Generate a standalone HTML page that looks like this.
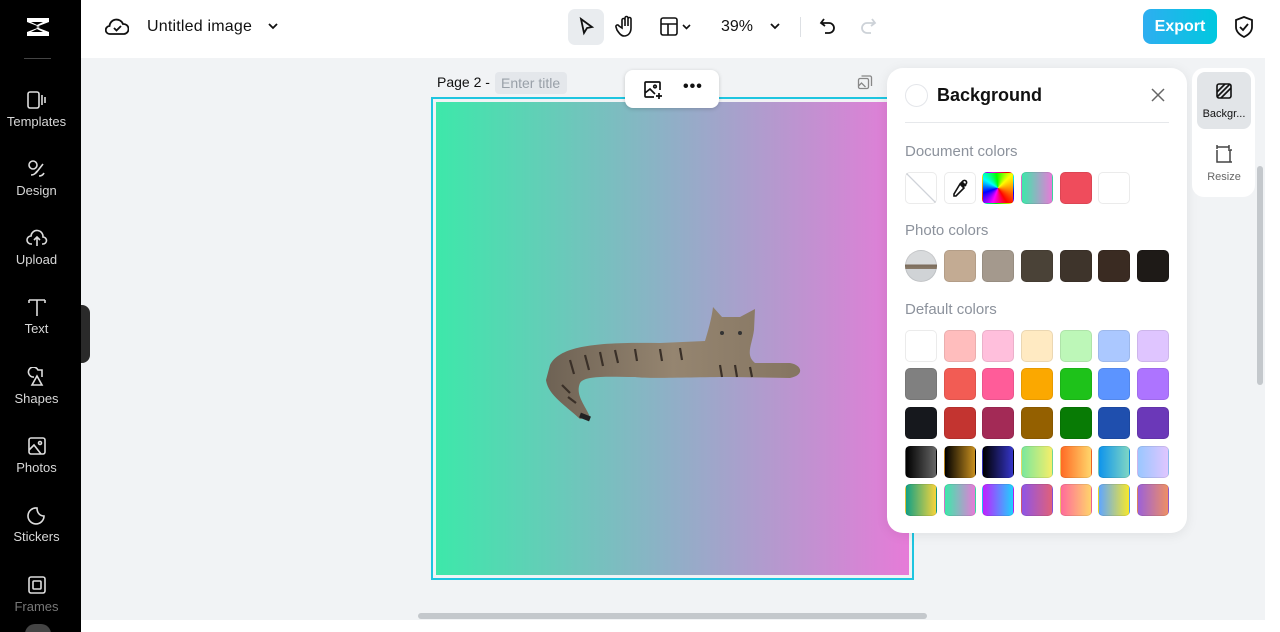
<!DOCTYPE html>
<html><head><meta charset="utf-8"><style>
*{box-sizing:border-box;margin:0;padding:0}
html,body{width:1280px;height:632px;overflow:hidden}
body{background:#f1f3f5;font-family:"Liberation Sans",sans-serif;position:relative}
.side{position:absolute;left:0;top:0;width:81px;height:632px;background:#000;overflow:hidden}
.side .it{position:absolute;left:-4px;width:81px;text-align:center;color:#d8d8d8;font-size:13px}
.side svg{display:block;margin:0 auto 4px}
.top{position:absolute;left:81px;top:0;right:0;height:58px;background:#fff}
.abs{position:absolute}
.sw{position:absolute;width:32px;height:32px;border-radius:5px;border:1px solid rgba(0,0,0,.08)}
.lbl{position:absolute;left:905px;font-size:15px;color:#8c929c}
</style></head><body>
<div class="side">
  <svg class="abs" style="left:23px;top:14px" width="30" height="26" viewBox="0 0 30 26"><path d="M4 4 L26 4 L26 8 L13 13 L26 18 L26 22 L4 22 L4 18 L17 13 L4 8Z" fill="#fff"/><path d="M8 8 L20 8 L14 11Z M8 18 L20 18 L14 15Z" fill="#000"/></svg>
  <div class="abs" style="left:24px;top:58px;width:27px;height:1px;background:#444"></div>
  <div class="it" style="top:90px"><svg width="22" height="20" viewBox="0 0 22 20" fill="none" stroke="#ddd" stroke-width="1.6"><rect x="2" y="2" width="11" height="16" rx="2"/><path d="M16 5v10M19 7v6"/></svg>Templates</div>
  <div class="it" style="top:159px"><svg width="22" height="20" viewBox="0 0 22 20" fill="none" stroke="#ddd" stroke-width="1.6"><circle cx="7" cy="6" r="4"/><path d="M10 14l7-9M5 16c3 0 5-2 6-4M13 17c2 0 4-1 5-3"/></svg>Design</div>
  <div class="it" style="top:228px"><svg width="22" height="20" viewBox="0 0 22 20" fill="none" stroke="#ddd" stroke-width="1.6"><path d="M6 16H5a4 4 0 010-8 6 6 0 0112 1 3.5 3.5 0 010 7h-1M11 18v-8M8 12l3-3 3 3"/></svg>Upload</div>
  <div class="it" style="top:297px"><svg width="22" height="20" viewBox="0 0 22 20" fill="none" stroke="#ddd" stroke-width="1.6"><path d="M3 3h16M11 3v16M3 3v3M19 3v3"/></svg>Text</div>
  <div class="it" style="top:367px"><svg width="22" height="20" viewBox="0 0 22 20" fill="none" stroke="#ddd" stroke-width="1.6"><path d="M8 10a5 5 0 114 -7h4v7M11 9l-5 9h10z"/></svg>Shapes</div>
  <div class="it" style="top:436px"><svg width="22" height="20" viewBox="0 0 22 20" fill="none" stroke="#ddd" stroke-width="1.6"><rect x="3" y="2" width="16" height="16" rx="2"/><path d="M3 14l5-5 7 9"/><circle cx="14" cy="7" r="1.5"/></svg>Photos</div>
  <div class="it" style="top:505px"><svg width="22" height="20" viewBox="0 0 22 20" fill="none" stroke="#ddd" stroke-width="1.6"><path d="M18 11a8 8 0 11-7-8c0 5 3 8 7 8z"/></svg>Stickers</div>
  <div class="it" style="top:575px;color:#777"><svg width="22" height="20" viewBox="0 0 22 20" fill="none" stroke="#ddd" stroke-width="1.6"><rect x="3" y="2" width="16" height="16" rx="2"/><rect x="7" y="6" width="8" height="8" rx="1"/></svg>Frames</div>
  <div class="abs" style="left:25px;top:624px;width:26px;height:20px;border-radius:13px;background:#444"></div>
</div>
<div class="abs" style="left:81px;top:305px;width:9px;height:58px;background:#2a2a2a;border-radius:0 8px 8px 0"></div>
<div class="top">
  <svg class="abs" style="left:24px;top:16px" width="24" height="22" viewBox="0 0 24 22" fill="none" stroke="#111" stroke-width="1.8"><path d="M6 18H5a4 4 0 01-.5-8A7 7 0 0118 8a5 5 0 011 10z"/><path d="M9 12l2.5 2.5L16 10"/></svg>
  <div class="abs" style="left:66px;top:18px;font-size:16px;color:#111;font-weight:500;letter-spacing:.2px">Untitled image</div>
  <svg class="abs" style="left:186px;top:21px" width="12" height="10" viewBox="0 0 12 10" fill="none" stroke="#111" stroke-width="1.8"><path d="M2 3l4 4 4-4"/></svg>
  <div class="abs" style="left:487px;top:9px;width:36px;height:36px;border-radius:7px;background:#e9ecef"></div>
  <svg class="abs" style="left:495px;top:16px" width="20" height="22" viewBox="0 0 20 22" fill="none" stroke="#111" stroke-width="1.8"><path d="M5 3l11 8-5 1-3 5z"/></svg>
  <svg class="abs" style="left:534px;top:15px" width="22" height="24" viewBox="0 0 22 24" fill="none" stroke="#111" stroke-width="1.6"><path d="M7 13V5a1.5 1.5 0 013 0v6V3a1.5 1.5 0 013 0v8V4a1.5 1.5 0 013 0v9c0 5-3 8-7 8-3 0-5-3-7-6l-1-3a1.5 1.5 0 013-1z"/></svg>
  <svg class="abs" style="left:578px;top:16px" width="34" height="22" viewBox="0 0 34 22" fill="none" stroke="#111" stroke-width="1.6"><rect x="2" y="2" width="16" height="17" rx="2"/><path d="M2 8h16M9 8v11M24 9l3.5 3.5L31 9"/></svg>
  <div class="abs" style="left:640px;top:18px;font-size:16px;color:#111">39%</div>
  <svg class="abs" style="left:688px;top:21px" width="12" height="10" viewBox="0 0 12 10" fill="none" stroke="#111" stroke-width="1.8"><path d="M2 3l4 4 4-4"/></svg>
  <div class="abs" style="left:719px;top:17px;width:1px;height:20px;background:#dde0e4"></div>
  <svg class="abs" style="left:737px;top:16px" width="20" height="20" viewBox="0 0 20 20" fill="none" stroke="#111" stroke-width="1.8"><path d="M6 3L3 7l4 3M3 7h8a5 5 0 010 10H7"/></svg>
  <svg class="abs" style="left:777px;top:16px" width="20" height="20" viewBox="0 0 20 20" fill="none" stroke="#cdd2d8" stroke-width="1.8"><path d="M14 3l3 4-4 3M17 7H9a5 5 0 000 10h4"/></svg>
  <div class="abs" style="left:1062px;top:9px;width:74px;height:35px;border-radius:8px;background:linear-gradient(90deg,#2eaef0,#00c8df);color:#fff;font-size:16px;font-weight:bold;text-align:center;line-height:35px">Export</div>
  <svg class="abs" style="left:1152px;top:15px" width="22" height="24" viewBox="0 0 22 24" fill="none" stroke="#111" stroke-width="1.8"><path d="M11 2l8 3v7c0 5-4 8-8 10-4-2-8-5-8-10V5z"/><path d="M7 12l3 3 5-6"/></svg>
</div>
<!-- canvas -->
<div class="abs" style="left:437px;top:74px;font-size:14px;color:#111">Page 2 -</div>
<div class="abs" style="left:495px;top:72px;width:72px;height:22px;border-radius:4px;background:#e4e7eb;color:#99a0a8;font-size:14px;line-height:22px;padding-left:6px">Enter title</div>
<div class="abs" style="left:431px;top:97px;width:483px;height:483px;border:2px solid #1ec5e0"></div>
<div class="abs" style="left:436px;top:102px;width:473px;height:473px;background:linear-gradient(90deg,#3de8aa,#90afc7 50%,#e67bd8)"></div>
<svg class="abs" style="left:857px;top:74px" width="16" height="16" viewBox="0 0 16 16" fill="none" stroke="#888" stroke-width="1.3"><rect x="1.5" y="4.5" width="10" height="10" rx="1.5"/><path d="M4.5 2h8.5a1.5 1.5 0 011.5 1.5V12M1.5 12l3-3 4 4"/></svg>
<div class="abs" style="left:625px;top:70px;width:94px;height:38px;border-radius:8px;background:#fff;box-shadow:0 1px 4px rgba(0,0,0,.18)"></div>
<svg class="abs" style="left:642px;top:79px" width="22" height="22" viewBox="0 0 22 22" fill="none" stroke="#111" stroke-width="1.7"><path d="M12 18H4a1 1 0 01-1-1V4a1 1 0 011-1h13a1 1 0 011 1v7M3 14l5-4 5 5"/><circle cx="13" cy="7.5" r="1.3"/><path d="M17 14v6M14 17h6"/></svg>
<div class="abs" style="left:683px;top:78px;font-size:16px;font-weight:bold;color:#111;letter-spacing:1px">•••</div>
<!-- cat -->
<svg class="abs" style="left:540px;top:305px" width="270" height="120" viewBox="0 0 270 120">
<defs><linearGradient id="c" x1="0" x2="1"><stop offset="0" stop-color="#6e6254"/><stop offset=".5" stop-color="#958570"/><stop offset="1" stop-color="#857561"/></linearGradient></defs>
<path d="M10 60 C20 40 60 37 120 38 L165 36 C170 20 172 10 173 2 L182 12 L200 12 L215 4 L214 25 C212 40 205 50 215 58 L250 58 C262 60 265 70 250 73 L190 72 C150 72 110 74 95 72 C70 72 45 70 40 78 C35 90 45 100 50 112 L40 114 C25 100 8 90 6 75 Z" fill="url(#c)"/>
<path d="M30 55l4 14M45 50l4 15M60 47l3 14M75 45l3 13M95 44l2 12M120 44l2 12M140 43l2 12M180 60l2 12M195 60l2 12M210 62l2 10M22 80l8 8M28 92l8 6" stroke="#3a3028" stroke-width="2.2"/>
<circle cx="182" cy="28" r="2" fill="#333"/><circle cx="200" cy="28" r="2" fill="#333"/>
<path d="M40 110l10 4" stroke="#222" stroke-width="5"/>
</svg>
<div class="abs" style="left:418px;top:613px;width:509px;height:6px;border-radius:3px;background:#c4c8cc"></div>
<!-- panel -->
<div class="abs" style="left:887px;top:68px;width:300px;height:465px;background:#fff;border-radius:16px;box-shadow:0 2px 12px rgba(0,0,0,.08)"></div>
<div class="abs" style="left:905px;top:84px;width:23px;height:23px;border-radius:50%;border:1px solid #e4e6ea"></div>
<div class="abs" style="left:937px;top:85px;font-size:18px;font-weight:bold;color:#111">Background</div>
<svg class="abs" style="left:1150px;top:87px" width="16" height="16" viewBox="0 0 16 16" stroke="#666" stroke-width="1.5"><path d="M2 2l12 12M14 2L2 14"/></svg>
<div class="abs" style="left:905px;top:122px;width:264px;height:1px;background:#e6e8eb"></div>
<div class="lbl" style="top:143px">Document colors</div>
<div class="sw" style="left:905px;top:172px;background:linear-gradient(45deg,#fff 48%,#cfd3d9 49%,#cfd3d9 51%,#fff 52%)"></div>
<div class="sw" style="left:944px;top:172px;background:#fff"></div>
<svg class="abs" style="left:950px;top:178px" width="20" height="20" viewBox="0 0 20 20" fill="none" stroke="#111" stroke-width="1.6"><path d="M12 4l4 4M10 6l4 4-8 8H4v-2zM13 3a2 2 0 013 3l-2 2-3-3z"/></svg>
<div class="sw" style="left:982px;top:172px;background:conic-gradient(from 200deg,#f0f,#00f,#0ff,#0f0,#ff0,#f80,#f00,#f0f)"></div>
<div class="sw" style="left:1021px;top:172px;background:linear-gradient(90deg,#3de8aa,#e67bd8)"></div>
<div class="sw" style="left:1060px;top:172px;background:#ef4c5c"></div>
<div class="sw" style="left:1098px;top:172px;background:#fff"></div>
<div class="lbl" style="top:222px">Photo colors</div>
<div class="sw" style="left:905px;top:250px;border-radius:50%;background:linear-gradient(#d8dadc 45%,#7a6b5a 45%,#8a7b6a 60%,#d0d3d6 60%)"></div>
<div class="sw" style="left:944px;top:250px;background:#c3ab93"></div>
<div class="sw" style="left:982px;top:250px;background:#a4998d"></div>
<div class="sw" style="left:1021px;top:250px;background:#4a4237"></div>
<div class="sw" style="left:1060px;top:250px;background:#3e342b"></div>
<div class="sw" style="left:1098px;top:250px;background:#3a2b22"></div>
<div class="sw" style="left:1137px;top:250px;background:#1e1a17"></div>
<div class="lbl" style="top:301px">Default colors</div>
<div id="grid"></div>
<!-- right tabs -->
<div class="abs" style="left:1192px;top:68px;width:63px;height:129px;background:#fff;border-radius:12px"></div>
<div class="abs" style="left:1197px;top:72px;width:54px;height:57px;background:#e2e5e8;border-radius:8px"></div>
<svg class="abs" style="left:1215px;top:82px" width="18" height="18" viewBox="0 0 18 18" fill="none" stroke="#111" stroke-width="1.6"><rect x="2" y="2" width="14" height="14" rx="2"/><path d="M2 10l8-8M6 16l10-10M2 15L15 2"/></svg>
<div class="abs" style="left:1197px;top:108px;width:54px;text-align:center;font-size:11px;color:#111">Backgr...</div>
<svg class="abs" style="left:1213px;top:144px" width="22" height="20" viewBox="0 0 22 20" fill="none" stroke="#444" stroke-width="1.5"><path d="M4 6v12h12M4 3h12M2 3h0M17 6v12M15 6h4M15 18h4M4 1v4M16 1v4"/></svg>
<div class="abs" style="left:1197px;top:171px;width:54px;text-align:center;font-size:11px;color:#666">Resize</div>
<div class="abs" style="left:1257px;top:166px;width:6px;height:219px;border-radius:3px;background:#c4c8cc"></div>
<div class="abs" style="left:1265px;top:0;width:15px;height:632px;background:#fff"></div>
<div class="abs" style="left:81px;top:620px;width:1184px;height:12px;background:#fff"></div>
<script>
var c=[["#fff","#ffbdbd","#ffbfdc","#ffeac2","#bdf7b8","#abc8ff","#dfc5ff"],
["#808080","#f25c54","#ff5c99","#fba800","#1ec21a","#5c94ff","#ad74ff"],
["#16181d","#c33430","#a32a56","#946000","#087b05","#1f4fae","#6b38b8"],
["linear-gradient(90deg,#000,#666)","linear-gradient(90deg,#000,#c9901f)","linear-gradient(90deg,#000,#3535c8)","linear-gradient(90deg,#7be89d,#f5ee6a)","linear-gradient(90deg,#ff6b25,#ffd66b)","linear-gradient(90deg,#0f94ec,#7ed6c4)","linear-gradient(90deg,#9ac7ff,#e0c6ff)"],
["linear-gradient(90deg,#13a085,#f6d43b)","linear-gradient(90deg,#3de8aa,#e67bd8)","linear-gradient(90deg,#c120ff,#1fd1ff)","linear-gradient(90deg,#8f55e6,#e0607a)","linear-gradient(90deg,#ff6b9b,#ffd36b)","linear-gradient(90deg,#5fa6ff,#f7e82b)","linear-gradient(90deg,#9c61d8,#ee8f64)"]];
var ys=[330,368,407,446,484],xs=[905,944,982,1021,1060,1098,1137],h="";
for(var r=0;r<5;r++)for(var i=0;i<7;i++)h+='<div class="sw" style="left:'+xs[i]+'px;top:'+ys[r]+'px;background:'+c[r][i]+'"></div>';
document.getElementById("grid").innerHTML=h;
</script>
</body></html>
